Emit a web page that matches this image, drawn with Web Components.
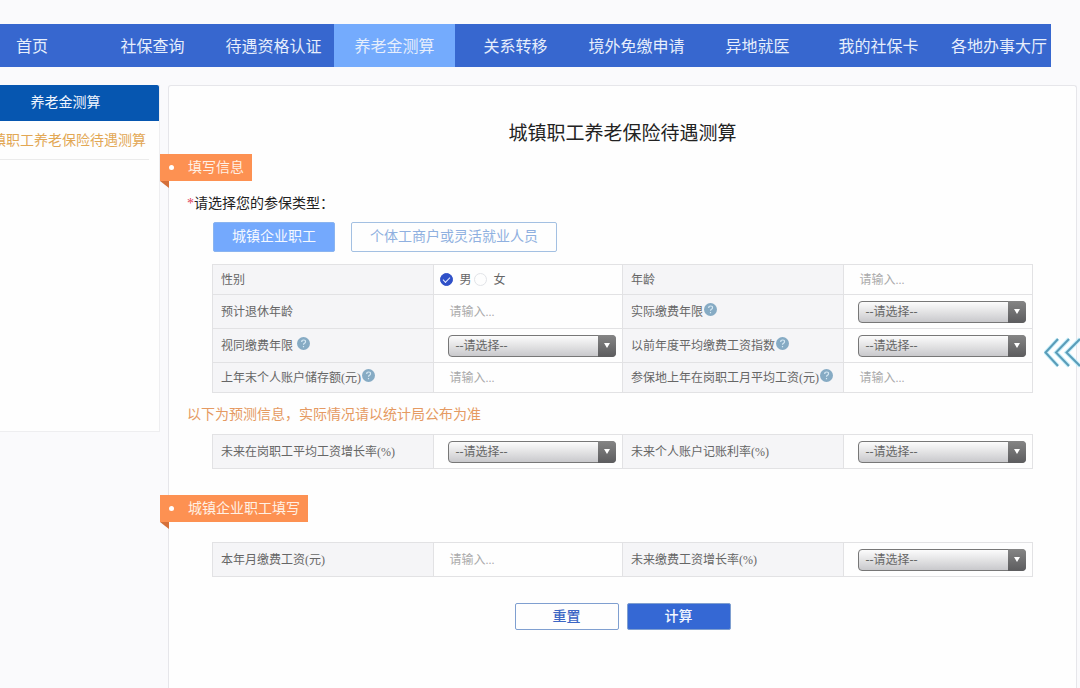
<!DOCTYPE html>
<html lang="zh-CN">
<head>
<meta charset="utf-8">
<title>养老金测算</title>
<style>
  body {
    margin: 0;
    background: #fafafc;
    color: #666;
    font-family: "Liberation Serif", "Noto Sans CJK SC", sans-serif;
    font-size: 14px;
    line-height: 20px;
  }
</style>
</head>
<body>
<pension-page></pension-page>

<script>
function attach(host, html) {
    const elem = document.createElement('template')
    elem.innerHTML = html
    host.attachShadow({ mode: 'open' }).appendChild(elem.content.cloneNode(true))
}

class TopNav extends HTMLElement {
    constructor() {
        super();
        const items = ["首页", "社保查询", "待遇资格认证", "养老金测算", "关系转移", "境外免缴申请", "异地就医", "我的社保卡", "各地办事大厅"];
        attach(this, `
          <style>
            :host { display: block; background: #3767cf; }
            nav {
              display: grid;
              grid-template-columns: 92fr repeat(7, 121fr) 112fr;
              height: 43px;
            }
            a {
              display: flex;
              align-items: center;
              justify-content: center;
              padding-top: 2px;
              color: #e6eefc;
              font-size: 16px;
              text-decoration: none;
              white-space: nowrap;
            }
            a:first-child { justify-content: flex-start; padding-left: 16px; }
            a:last-child { padding-left: 8px; }
            a.active { background: #74abfd; }
          </style>
          <nav>${items.map(t => `<a href="#"${t === "养老金测算" ? ' class="active"' : ''}>${t}</a>`).join('')}</nav>
        `)
    }
}

class SideMenu extends HTMLElement {
    constructor() {
        super();
        attach(this, `
          <style>
            :host {
              display: block;
              box-sizing: border-box;
              min-height: 347px;
              background: #fefefe;
              border: 1px solid #eeeef0;
              border-width: 0 1px 1px 0;
              overflow: hidden;
            }
            h2 {
              margin: 0;
              padding: 8px 28px 8px 0;
              background: #0656b0;
              border-radius: 0 2px 0 0;
              color: #f0f6ff;
              font-size: 14px;
              font-weight: normal;
              text-align: center;
            }
            div {
              display: flex;
              justify-content: flex-end;
              margin-right: 10px;
              padding: 10px 3px 8px 0;
              border-bottom: 1px solid #ebebeb;
            }
            ::slotted(a) { color: #e2a754; text-decoration: none; white-space: nowrap; }
          </style>
          <h2>${this.getAttribute("heading")}</h2>
          <div><slot></slot></div>
        `)
    }
}

class RibbonTitle extends HTMLElement {
    constructor() {
        super();
        attach(this, `
          <style>
            :host { display: block; margin-left: -9px; }
            h3 {
              display: inline-flex;
              align-items: center;
              gap: 14px;
              height: 27px;
              margin: 0;
              padding: 0 8px 0 9px;
              background: #fd9152;
              color: #fff0e4;
              font-size: 14px;
              font-weight: normal;
              vertical-align: top;
            }
            h3::before { content: ""; width: 5px; height: 5px; border-radius: 50%; background: #fff; }
            svg { display: block; }
          </style>
          <h3><slot></slot></h3>
          <svg width="9" height="7"><path d="M0 0h9v7z" fill="#d4703a"/></svg>
        `)
    }
}

class HelpIcon extends HTMLElement {
    constructor() {
        super();
        attach(this, `
          <style>
            :host {
              display: inline-block;
              width: 13px;
              height: 13px;
              margin-left: 1px;
            }
            svg { display: block; }
          </style>
          <svg width="13" height="13" viewBox="0 0 13 13">
            <circle cx="6.5" cy="6.5" r="6.5" fill="#86abc4"/>
            <path d="M4.700 5q0-2 2-2t1.800 1.800q0 1-1 1.500t-1 1.400M6.500 9v1.300" fill="none" stroke="#d5e8f3" stroke-width="1.200"/>
          </svg>
        `)
    }
}

// rows of the three tables: [label, control, help]
const tables = {
    basic: [
        [["性别", "sex"], ["年龄", "text"]],
        [["预计退休年龄", "text"], ["实际缴费年限", "select", true]],
        [["视同缴费年限 ", "select", true], ["以前年度平均缴费工资指数", "select", true]],
        [["上年末个人账户储存额(元)", "text", true], ["参保地上年在岗职工月平均工资(元)", "text", true]]
    ],
    forecast: [
        [["未来在岗职工平均工资增长率(%)", "select"], ["未来个人账户记账利率(%)", "select"]]
    ],
    employee: [
        [["本年月缴费工资(元)", "text"], ["未来缴费工资增长率(%)", "select"]]
    ]
}

class FormTable extends HTMLElement {
    constructor() {
        super();
        const rows = tables[this.getAttribute("name")];
        attach(this, `
          <style>
            :host { display: block; margin: 0 43px; font-size: 12px; }
            table { width: 100%; table-layout: fixed; border-collapse: collapse; }
            th, td { height: 33px; padding: 0; border: 1px solid #e2e2e4; }
            tr.short > * { height: 29px; }
            th {
              width: 27%;
              padding-left: 8px;
              background: #f5f5f7;
              box-sizing: border-box;
              font-weight: normal;
              text-align: left;
              white-space: nowrap;
            }
            td { background: #fefefe; }
            .radios { display: flex; align-items: center; padding-left: 6px; }
            .radios label { margin: 0 3px 0 6px; }
            input, select {
              box-sizing: border-box;
              margin: 0;
              font: inherit;
              color: #666;
            }
            input[type=text] {
              display: block;
              width: 100%;
              height: 24px;
              padding: 2px 6px 0 15px;
              border: 0;
              background: none;
            }
            input::placeholder { color: #aaa; }
            input[type=radio] {
              appearance: none;
              display: grid;
              place-items: center;
              width: 13px;
              height: 13px;
              border: 1px solid #e2e4e8;
              border-radius: 50%;
            }
            input[type=radio]:checked { background: #2f50c8; border-color: #2f50c8; }
            input[type=radio]:checked::before {
              content: "";
              width: 6px;
              height: 3px;
              margin-bottom: 2px;
              border: solid #e4ecff;
              border-width: 0 0 1px 1px;
              transform: rotate(-45deg);
            }
            .select { display: grid; margin: 0 6px 0 14px; }
            .select > * { grid-area: 1 / 1; }
            select {
              appearance: none;
              width: 100%;
              height: 22px;
              padding: 0 20px 0 6px;
              border: 1px solid #777;
              border-radius: 4px;
              background: linear-gradient(#fcfcfc, #c9c9cc);
            }
            .arrow {
              display: grid;
              justify-items: center;
              justify-self: end;
              box-sizing: border-box;
              width: 18px;
              height: 22px;
              padding-top: 8px;
              border-radius: 0 4px 4px 0;
              background: linear-gradient(#858585, #5c5c5e);
              pointer-events: none;
            }
          </style>
          <table>
            ${rows.map((row, r) => `<tr${rows.length > 1 && (r === 0 || r === rows.length - 1) ? ' class="short"' : ''}>
              ${row.map((cell, c) => this.cell(cell, `f${r}${c}`)).join('')}
            </tr>`).join('')}
          </table>
        `)
    }

    cell([label, type, help], id) {
        const icon = help ? '<help-icon></help-icon>' : ''
        if (type === "sex") {
            return `<th id="${id}">${label}</th>
              <td><div class="radios" role="radiogroup" aria-labelledby="${id}">
                <input type="radio" name="sex" id="male" checked><label for="male">男</label>
                <input type="radio" name="sex" id="female"><label for="female">女</label>
              </div></td>`
        }
        const control = type === "text"
            ? `<input type="text" id="${id}" placeholder="请输入...">`
            : `<div class="select">
                <select id="${id}"><option>--请选择--</option></select>
                <span class="arrow"><svg width="6" height="5"><path d="M0 0h6l-3 5z" fill="#fff"/></svg></span>
              </div>`
        return `<th><label for="${id}">${label}</label>${icon}</th><td>${control}</td>`
    }
}

class UiButton extends HTMLElement {
    constructor() {
        super();
        attach(this, `
          <style>
            :host { display: inline-block; }
            button {
              display: block;
              box-sizing: border-box;
              height: 30px;
              padding: 0 18px;
              border: 1px solid #a3c0e2;
              border-radius: 2px;
              background: #fefefe;
              color: #8fb0e0;
              font: inherit;
            }
            :host([kind=chosen]) button { background: #74a9fd; border-color: #8ab4f0; color: #f4f8ff; }
            :host([kind=reset]) button, :host([kind=submit]) button {
              width: 104px;
              height: 27px;
              padding: 0;
              border-color: #7f9fd0;
              color: #3c66c4;
              font-weight: 500;
            }
            :host([kind=submit]) button { background: #3568d4; color: #f4f8ff; }
          </style>
          <button type="button"><slot></slot></button>
        `)
    }
}

class DrawerToggle extends HTMLElement {
    constructor() {
        super();
        attach(this, `
          <style>
            :host { position: absolute; top: 337px; right: 0; }
            button { display: block; padding: 0; border: 0; background: none; }
            svg { display: block; }
          </style>
          <button type="button" aria-label="展开">
            <svg width="36" height="31" viewBox="0 0 36 31" fill="none">
              <path d="M14 2L1.500 15.500L14 29M25 2L12 15.500L25 29M36 2L22.500 15.500L36 29" stroke="#c3eefa" stroke-width="4"/>
              <path d="M14 2L1.500 15.500L14 29M25 2L12 15.500L25 29M36 2L22.500 15.500L36 29" stroke="#5a9cb8" stroke-width="2"/>
            </svg>
          </button>
        `)
    }
}

class PensionPage extends HTMLElement {
    constructor() {
        super();
        attach(this, `
          <style>
            :host {
              display: flex;
              flex-direction: column;
              box-sizing: border-box;
              min-height: 100vh;
              padding-top: 24px;
              position: relative;
            }
            top-nav { margin-right: 29px; }
            .columns {
              display: grid;
              grid-template-columns: 160px 1fr;
              gap: 8px;
              flex: 1;
              margin: 18px 3px 0 0;
            }
            side-menu { align-self: start; }
            main {
              border: 1px solid #e6e6ea;
              border-bottom: 0;
              border-radius: 3px 3px 0 0;
              background: #fefefe;
            }
            h1 {
              margin: 34px 0 6px;
              color: #222;
              font-size: 19px;
              font-weight: normal;
              line-height: 28px;
              text-align: center;
            }
            p { margin: 0 18px; }
            .ask { margin-top: 6px; color: #222; }
            .ask span { color: #e0405a; }
            .types { display: flex; gap: 16px; margin: 8px 44px 12px; }
            .note { margin-top: 12px; margin-bottom: 9px; color: #e59a62; }
            .employee { margin: 26px 0 13px -9px; }
            .actions { display: flex; justify-content: center; gap: 8px; margin-top: 26px; }
          </style>
          <top-nav></top-nav>
          <div class="columns">
            <side-menu heading="养老金测算"><a href="#">镇职工养老保险待遇测算</a></side-menu>
            <main>
              <h1>城镇职工养老保险待遇测算</h1>
              <ribbon-title>填写信息</ribbon-title>
              <p class="ask"><span>*</span>请选择您的参保类型：</p>
              <div class="types">
                <ui-button kind="chosen">城镇企业职工</ui-button>
                <ui-button>个体工商户或灵活就业人员</ui-button>
              </div>
              <form-table name="basic"></form-table>
              <p class="note">以下为预测信息，实际情况请以统计局公布为准</p>
              <form-table name="forecast"></form-table>
              <ribbon-title class="employee">城镇企业职工填写</ribbon-title>
              <form-table name="employee"></form-table>
              <div class="actions">
                <ui-button kind="reset">重置</ui-button>
                <ui-button kind="submit">计算</ui-button>
              </div>
            </main>
          </div>
          <drawer-toggle></drawer-toggle>
        `)
    }
}

customElements.define("top-nav", TopNav);
customElements.define("side-menu", SideMenu);
customElements.define("ribbon-title", RibbonTitle);
customElements.define("help-icon", HelpIcon);
customElements.define("form-table", FormTable);
customElements.define("ui-button", UiButton);
customElements.define("drawer-toggle", DrawerToggle);
customElements.define("pension-page", PensionPage);
</script>
</body>
</html>
